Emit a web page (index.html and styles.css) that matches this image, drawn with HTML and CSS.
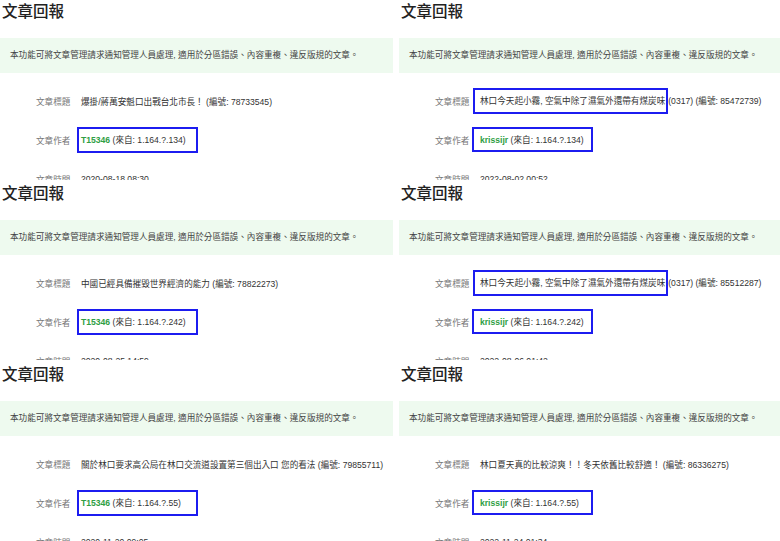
FILE: index.html
```html
<!DOCTYPE html>
<html>
<head>
    <meta charset="utf-8">
    <title>文章回報</title>
    <link rel="stylesheet" href="styles.css">
</head>
<body>
<div class="board">
    <section class="tile">
        <h1>文章回報</h1>
        <p class="notice">本功能可將文章管理請求通知管理人員處理, 適用於分區錯誤、內容重複、違反版規的文章。</p>
        <dl class="info">
            <div class="row"><dt>文章標題</dt><dd>爆掛/蔣萬安魁口出戰台北市長！ (編號: 78733545)</dd></div>
            <div class="row"><dt>文章作者</dt><dd><span class="who"><b class="user">T15346</b> (來自: 1.164.?.134)</span></dd></div>
            <div class="row"><dt>文章時間</dt><dd>2020-08-18 08:30</dd></div>
        </dl>
    </section>
    <section class="tile right">
        <h1>文章回報</h1>
        <p class="notice">本功能可將文章管理請求通知管理人員處理, 適用於分區錯誤、內容重複、違反版規的文章。</p>
        <dl class="info">
            <div class="row"><dt>文章標題</dt><dd><span class="mark">林口今天起小霧, 空氣中除了濕氣外還帶有煤炭味</span>(0317) (編號: 85472739)</dd></div>
            <div class="row"><dt>文章作者</dt><dd><span class="who"><b class="user">krissijr</b> (來自: 1.164.?.134)</span></dd></div>
            <div class="row"><dt>文章時間</dt><dd>2022-08-02 00:52</dd></div>
        </dl>
    </section>
    <section class="tile mid">
        <h1>文章回報</h1>
        <p class="notice">本功能可將文章管理請求通知管理人員處理, 適用於分區錯誤、內容重複、違反版規的文章。</p>
        <dl class="info">
            <div class="row"><dt>文章標題</dt><dd>中國已經具備摧毀世界經濟的能力 (編號: 78822273)</dd></div>
            <div class="row"><dt>文章作者</dt><dd><span class="who"><b class="user">T15346</b> (來自: 1.164.?.242)</span></dd></div>
            <div class="row"><dt>文章時間</dt><dd>2020-08-25 14:59</dd></div>
        </dl>
    </section>
    <section class="tile right mid">
        <h1>文章回報</h1>
        <p class="notice">本功能可將文章管理請求通知管理人員處理, 適用於分區錯誤、內容重複、違反版規的文章。</p>
        <dl class="info">
            <div class="row"><dt>文章標題</dt><dd><span class="mark">林口今天起小霧, 空氣中除了濕氣外還帶有煤炭味</span>(0317) (編號: 85512287)</dd></div>
            <div class="row"><dt>文章作者</dt><dd><span class="who"><b class="user">krissijr</b> (來自: 1.164.?.242)</span></dd></div>
            <div class="row"><dt>文章時間</dt><dd>2022-08-06 01:42</dd></div>
        </dl>
    </section>
    <section class="tile end">
        <h1>文章回報</h1>
        <p class="notice">本功能可將文章管理請求通知管理人員處理, 適用於分區錯誤、內容重複、違反版規的文章。</p>
        <dl class="info">
            <div class="row"><dt>文章標題</dt><dd>關於林口要求高公局在林口交流道設置第三個出入口 您的看法 (編號: 79855711)</dd></div>
            <div class="row"><dt>文章作者</dt><dd><span class="who"><b class="user">T15346</b> (來自: 1.164.?.55)</span></dd></div>
            <div class="row"><dt>文章時間</dt><dd>2020-11-20 09:05</dd></div>
        </dl>
    </section>
    <section class="tile right end">
        <h1>文章回報</h1>
        <p class="notice">本功能可將文章管理請求通知管理人員處理, 適用於分區錯誤、內容重複、違反版規的文章。</p>
        <dl class="info">
            <div class="row"><dt>文章標題</dt><dd>林口夏天真的比較涼爽！！冬天依舊比較舒適！ (編號: 86336275)</dd></div>
            <div class="row"><dt>文章作者</dt><dd><span class="who"><b class="user">krissijr</b> (來自: 1.164.?.55)</span></dd></div>
            <div class="row"><dt>文章時間</dt><dd>2022-11-24 01:34</dd></div>
        </dl>
    </section>
</div>
</body>
</html>
```

FILE: styles.css
```css
body {
    margin: 0;
    background: #fff;
    color: #333;
    font-family: "Liberation Sans", "Noto Sans CJK TC", sans-serif;
}

.board {
    display: grid;
    grid-template-columns: 393px 387px;
    grid-template-rows: 180px 180px 181px;
}

.tile {
    overflow: hidden;
    white-space: nowrap;
    background: #fff;
}

.tile.right {
    padding-left: 6px;
}

.tile.mid {
    padding-top: 2px;
}

.tile.end {
    padding-top: 3px;
}

h1 {
    margin: 0 0 18px 2px;
    font-family: "Noto Sans CJK TC", sans-serif;
    font-size: 15.5px;
    line-height: 20px;
    font-weight: 500;
    color: #222;
}

.notice {
    margin: 0;
    height: 35px;
    line-height: 35px;
    padding-left: 10px;
    background: #eefaef;
    font-size: 8.6px;
    color: #444;
}

.info {
    margin: 8px 0 0;
    padding-left: 36px;
    font-size: 8.6px;
}

.row {
    display: flex;
    align-items: center;
    height: 39px;
}

dt {
    width: 45px;
    flex: none;
    color: #777;
}

dd {
    margin: 0;
    color: #333;
}

.user {
    color: #2f9e44;
}

.who,
.mark {
    position: relative;
    display: inline-block;
    line-height: 14px;
}

.who::before,
.mark::before {
    content: '';
    position: absolute;
    top: -6px;
    bottom: -6px;
    border: 2px solid #1c1cf0;
}

.who::before {
    left: -4px;
    width: 117px;
}

.right .who::before {
    left: -8px;
    width: 117px;
    bottom: -5px;
}

.mark {
    margin-right: 3px;
}

.mark::before {
    left: -7px;
    right: -3px;
}
```
